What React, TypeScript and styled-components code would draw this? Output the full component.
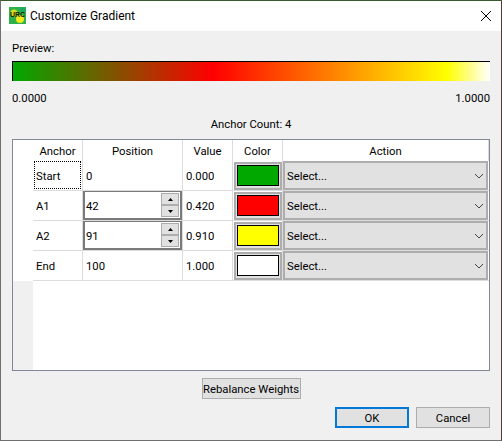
import { Fragment } from "react";
import styled, { createGlobalStyle } from "styled-components";

const GlobalStyle = createGlobalStyle`
  html, body {
    margin: 0;
    padding: 0;
    background: #f0f0f0;
  }
  * {
    box-sizing: border-box;
  }
`;

const Window = styled.div`
  width: 502px;
  height: 441px;
  display: flex;
  flex-direction: column;
  background: #f0f0f0;
  border: 1px solid #6f6f6f;
  border-top-color: #3c5a30;
  border-right-color: #5a3a30;
  font-family: Roboto, "Noto Sans", sans-serif;
  font-size: 11.3px;
  color: #000;
  overflow: hidden;
`;

const TitleBar = styled.div`
  height: 30px;
  flex: none;
  display: flex;
  align-items: center;
  background: #fff;
  padding: 0 7px 1px 8px;
  gap: 4px;
  font-size: 12px;
`;

const TitleText = styled.span`
  flex: 1;
`;

const CloseButton = styled.button`
  width: 16px;
  height: 16px;
  padding: 0;
  border: 0;
  background: none;
  display: flex;
`;

const Body = styled.div`
  flex: 1;
  display: flex;
  flex-direction: column;
  padding: 9px 11px 0;
`;

const PreviewLabel = styled.div`
  height: 21px;
  line-height: 18px;
`;

const GradientBar = styled.div`
  height: 20px;
  flex: none;
  border-top: 1px solid #000;
  border-left: 1px solid #000;
  background: linear-gradient(
    to right,
    #00a800 0%,
    #ff0000 42%,
    #ffff00 91%,
    #ffffff 100%
  );
`;

const ScaleRow = styled.div`
  display: flex;
  justify-content: space-between;
  margin-top: 9px;
  height: 16px;
  line-height: 18px;
`;

const AnchorCount = styled.div`
  text-align: center;
  margin-top: 10px;
  height: 16px;
  line-height: 18px;
`;

const TableFrame = styled.div`
  margin-top: 7px;
  height: 232px;
  flex: none;
  display: flex;
  background: #fff;
  border: 1px solid #82879a;
`;

const Gutter = styled.div`
  width: 20px;
  flex: none;
  display: flex;
  flex-direction: column;
`;

const GutterTop = styled.div`
  height: 141px;
  flex: none;
  background: #fff;
`;

const GutterRest = styled.div`
  flex: 1;
  background: #f0f0f0;
`;

const TableGrid = styled.div`
  flex: 1;
  display: grid;
  grid-template-columns: 50px 100px 50px 50px 206px;
  grid-template-rows: 21px repeat(4, 30px);
  align-content: start;
`;

const HeaderCell = styled.div`
  display: flex;
  align-items: center;
  justify-content: center;
  padding-top: 2px;
  border-right: 1px solid #dcdcdc;

  &:last-of-type {
    border-right: 0;
  }
`;

const Cell = styled.div<{ $last?: boolean; $inset?: number }>`
  display: flex;
  align-items: center;
  padding-left: ${({ $inset = 3 }) => $inset}px;
  border-bottom: 1px solid #dcdcdc;
  border-right: ${({ $last }) => ($last ? "0" : "1px solid #dcdcdc")};
`;

const CellText = styled.span`
  padding-top: 2px;
`;

const FocusLabel = styled.span`
  flex: 1;
  align-self: stretch;
  display: flex;
  align-items: center;
  margin: 0 1px 1px -2px;
  padding: 2px 0 0 1px;
  border: 1px dotted #000;
`;

const SpinField = styled.div`
  display: flex;
  align-items: center;
  justify-content: space-between;
  height: 29px;
  width: 100px;
  padding: 0 1px;
  background: #fff;
  border: 2px solid #7a7a7a;
  border-top-width: 1px;
`;

const SpinButtons = styled.div`
  display: flex;
  flex-direction: column;
  width: 18px;
  height: 24px;
  flex: none;
`;

const SpinButton = styled.div`
  flex: 1;
  display: flex;
  align-items: center;
  justify-content: center;
  background: #e1e1e1;
  border: 1px solid #adadad;
`;

const SwatchButton = styled.button`
  width: 48px;
  height: 28px;
  padding: 1px 1px 2px;
  display: flex;
  background: #e1e1e1;
  border: 2px solid #adadad;
`;

const Swatch = styled.div<{ $color: string }>`
  flex: 1;
  height: 100%;
  background: ${({ $color }) => $color};
  border: 1px solid #000;
`;

const SelectBox = styled.div`
  width: 205px;
  height: 29px;
  display: flex;
  align-items: center;
  justify-content: space-between;
  padding: 0 2px 0 2px;
  background: #e1e1e1;
  border: 2px solid #adadad;
`;

const RebalanceRow = styled.div`
  display: flex;
  justify-content: center;
  margin-top: 7px;
`;

const DialogButton = styled.button<{ $primary?: boolean }>`
  height: 21px;
  padding: 1px 0 0;
  font: inherit;
  color: #000;
  white-space: nowrap;
  background: #e1e1e1;
  border: ${({ $primary }) =>
    $primary ? "2px solid #0078d7" : "1px solid #adadad"};
`;

const RebalanceButton = styled(DialogButton)`
  width: 99px;
`;

const ActionRow = styled.div`
  display: flex;
  justify-content: flex-end;
  gap: 7px;
  margin-top: 8px;
`;

const ActionButton = styled(DialogButton)`
  width: 74px;
`;

const Logo = () => (
  <svg width="17" height="17" viewBox="0 0 17 17">
    <rect width="17" height="17" fill="#2fb04a" />
    <circle cx="5" cy="6" r="3.5" fill="#d8dc20" />
    <circle cx="11" cy="12" r="4" fill="#f0e818" />
    <circle cx="14" cy="3" r="2.5" fill="#18a868" />
    <text
      x="8.5"
      y="10"
      textAnchor="middle"
      fontSize="7"
      fontWeight="700"
      fontFamily="Liberation Sans, sans-serif"
      fill="#1c1c00"
    >
      URC
    </text>
  </svg>
);

const CloseIcon = () => (
  <svg width="16" height="16" viewBox="0 0 16 16">
    <path d="M3 3 L13 13 M13 3 L3 13" stroke="#000" strokeWidth="1" />
  </svg>
);

const Chevron = () => (
  <svg width="10" height="6" viewBox="0 0 10 6">
    <path d="M1 1 L5 5 L9 1" fill="none" stroke="#444" strokeWidth="1" />
  </svg>
);

const Arrow = ({ up }: { up?: boolean }) => (
  <svg width="5" height="3" viewBox="0 0 5 3">
    <path d={up ? "M2.5 0 L5 3 L0 3 Z" : "M0 0 L5 0 L2.5 3 Z"} fill="#000" />
  </svg>
);

const Spinner = ({ value }: { value: string }) => (
  <SpinField>
    <CellText>{value}</CellText>
    <SpinButtons>
      <SpinButton>
        <Arrow up />
      </SpinButton>
      <SpinButton>
        <Arrow />
      </SpinButton>
    </SpinButtons>
  </SpinField>
);

const rows = [
  { anchor: "Start", position: "0", value: "0.000", color: "#00a800" },
  { anchor: "A1", position: "42", value: "0.420", color: "#ff0000", spin: true },
  { anchor: "A2", position: "91", value: "0.910", color: "#ffff00", spin: true },
  { anchor: "End", position: "100", value: "1.000", color: "#ffffff" },
];

const headers = ["Anchor", "Position", "Value", "Color", "Action"];

const App = () => {
  return (
    <Window>
      <GlobalStyle />
      <TitleBar>
        <Logo />
        <TitleText>Customize Gradient</TitleText>
        <CloseButton>
          <CloseIcon />
        </CloseButton>
      </TitleBar>
      <Body>
        <PreviewLabel>Preview:</PreviewLabel>
        <GradientBar />
        <ScaleRow>
          <span>0.0000</span>
          <span>1.0000</span>
        </ScaleRow>
        <AnchorCount>Anchor Count: 4</AnchorCount>
        <TableFrame>
          <Gutter>
            <GutterTop />
            <GutterRest />
          </Gutter>
          <TableGrid>
            {headers.map((h) => (
              <HeaderCell key={h}>{h}</HeaderCell>
            ))}
            {rows.map((row, idx) => (
              <Fragment key={row.anchor}>
                <Cell>
                  {idx === 0 ? (
                    <FocusLabel>{row.anchor}</FocusLabel>
                  ) : (
                    <CellText>{row.anchor}</CellText>
                  )}
                </Cell>
                <Cell $inset={row.spin ? 0 : 3}>
                  {row.spin ? (
                    <Spinner value={row.position} />
                  ) : (
                    <CellText>{row.position}</CellText>
                  )}
                </Cell>
                <Cell>
                  <CellText>{row.value}</CellText>
                </Cell>
                <Cell $inset={1}>
                  <SwatchButton>
                    <Swatch $color={row.color} />
                  </SwatchButton>
                </Cell>
                <Cell $last $inset={0}>
                  <SelectBox>
                    <CellText>Select...</CellText>
                    <Chevron />
                  </SelectBox>
                </Cell>
              </Fragment>
            ))}
          </TableGrid>
        </TableFrame>
        <RebalanceRow>
          <RebalanceButton>Rebalance Weights</RebalanceButton>
        </RebalanceRow>
        <ActionRow>
          <ActionButton $primary>OK</ActionButton>
          <ActionButton>Cancel</ActionButton>
        </ActionRow>
      </Body>
    </Window>
  );
};

export default App;
